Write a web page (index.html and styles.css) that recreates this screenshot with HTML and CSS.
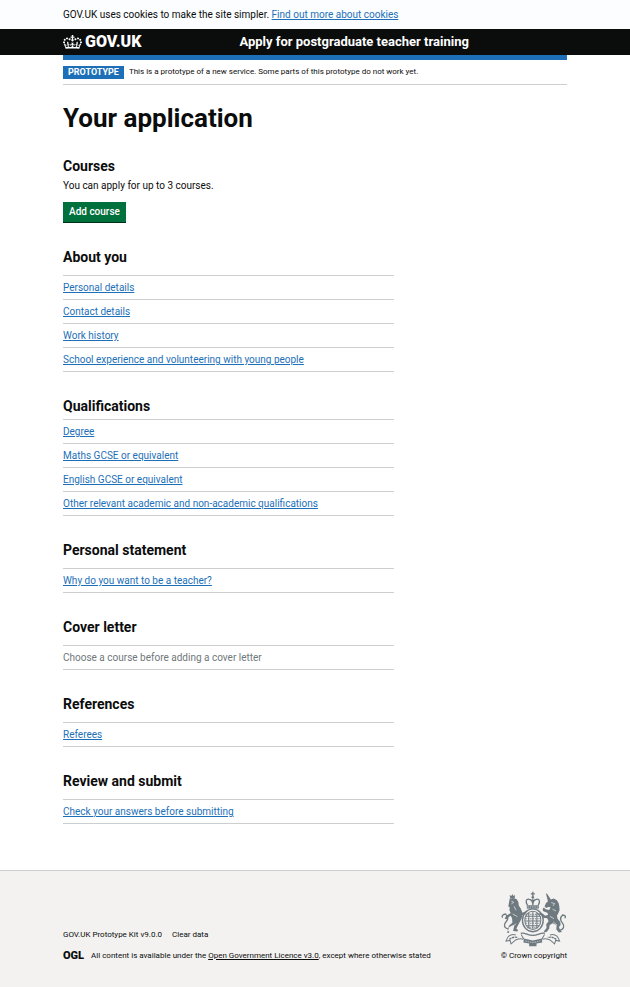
FILE: index.html
```html
<!DOCTYPE html>
<html lang="en">
<head>
<meta charset="utf-8">
<meta name="viewport" content="width=device-width, initial-scale=1">
<title>Your application</title>
<link rel="stylesheet" href="styles.css">
</head>
<body>
<div class="cookie-bar">
  <p class="container">GOV.UK uses cookies to make the site simpler. <a href="#cookies">Find out more about cookies</a></p>
</div>
<header class="header">
  <div class="container header-row">
    <a class="logo" href="#home">
      <svg class="crown" viewBox="0 0 132 97" aria-hidden="true"><path fill="currentColor" fill-rule="evenodd" d="M25 30.2c3.5 1.5 7.7-.2 9.1-3.7 1.5-3.6-.2-7.8-3.9-9.2-3.6-1.4-7.6.3-9.1 3.9-1.4 3.5.3 7.5 3.9 9zM9 39.5c3.6 1.5 7.8-.2 9.2-3.7 1.5-3.6-.2-7.8-3.9-9.1-3.6-1.5-7.6.2-9.1 3.8-1.4 3.5.3 7.5 3.8 9zM4.4 57.2c3.5 1.5 7.7-.2 9.1-3.8 1.5-3.6-.2-7.7-3.9-9.1-3.5-1.5-7.6.3-9.1 3.8-1.4 3.5.3 7.6 3.9 9.1zm38.3-21.4c3.5 1.5 7.7-.2 9.1-3.8 1.5-3.6-.2-7.7-3.9-9.1-3.6-1.5-7.6.3-9.1 3.8-1.3 3.6.4 7.7 3.9 9.1zm64.4-5.6c-3.6 1.5-7.8-.2-9.1-3.7-1.5-3.6.2-7.8 3.8-9.2 3.6-1.4 7.7.3 9.2 3.9 1.3 3.5-.4 7.5-3.9 9zm15.9 9.3c-3.6 1.5-7.7-.2-9.1-3.7-1.5-3.6.2-7.8 3.7-9.1 3.6-1.5 7.7.2 9.2 3.8 1.5 3.5-.3 7.5-3.8 9zm4.7 17.7c-3.6 1.5-7.8-.2-9.2-3.8-1.5-3.6.2-7.7 3.9-9.1 3.6-1.5 7.7.3 9.2 3.8 1.3 3.5-.4 7.6-3.9 9.1zM89.3 35.8c-3.6 1.5-7.8-.2-9.2-3.8-1.4-3.6.2-7.7 3.9-9.1 3.6-1.5 7.7.3 9.2 3.8 1.4 3.6-.3 7.7-3.9 9.1zM69.7 17.7l8.9 4.7V9.3l-8.9 2.8c-.2-.3-.5-.6-.9-.9L72.4 0H59.6l3.5 11.2c-.3.3-.6.5-.9.9l-8.8-2.8v13.1l8.8-4.7c.3.3.6.7.9.9l-5 15.4v.1c-.2.8-.4 1.6-.4 2.4 0 4.1 3.1 7.5 7 8.1h.2c.3 0 .7.1 1 .1.4 0 .7 0 1-.1h.2c4-.6 7.1-4.1 7.1-8.1 0-.8-.1-1.7-.4-2.4V34l-5.1-15.4c.4-.2.7-.6 1-.9zM66 92.8c16.9 0 32.8 1.1 47.1 3.2 4-16.9 8.9-26.7 14-33.5l-9.6-3.4c1 4.9 1.1 7.2 0 10.2-1.5-1.4-3-4.3-4.2-8.7L108.6 76c2.8-2 5-3.2 7.5-3.3-4.4 9.4-10 11.9-13.6 11.2-4.3-.8-6.3-4.6-5.6-7.9 1-4.7 5.7-5.9 8-.5 4.3-8.7-3-11.4-7.6-8.8 7.1-7.2 7.9-13.5 2.1-21.1-8 6.1-8.1 12.3-4.5 20.8-4.7-5.4-12.1-2.5-9.5 6.2 3.4-5.2 7.9-2 7.2 3.1-.6 4.3-6.4 7.8-13.5 7.2-10.3-.9-10.9-8-11.2-13.8 2.5-.5 7.1 1.8 11 7.3L80.2 60c-4.1 4.4-8 5.3-12.3 5.4 1.4-4.4 8-11.6 8-11.6H55.5s6.4 7.2 7.9 11.6c-4.2-.1-8-1-12.3-5.4l1.4 16.4c3.9-5.5 8.5-7.7 10.9-7.3-.3 5.8-.9 12.8-11.1 13.8-7.2.6-12.9-2.9-13.5-7.2-.7-5 3.8-8.3 7.1-3.1 2.7-8.7-4.6-11.6-9.4-6.2 3.7-8.5 3.6-14.7-4.6-20.8-5.8 7.6-5 13.9 2.2 21.1-4.7-2.6-11.9.1-7.7 8.8 2.3-5.5 7.1-4.2 8.1.5.7 3.3-1.3 7.1-5.7 7.9-3.5.7-9-1.8-13.5-11.2 2.5.1 4.7 1.3 7.5 3.3l-4.7-15.4c-1.2 4.4-2.7 7.2-4.3 8.7-1.1-3-.9-5.3 0-10.2l-9.5 3.4c5 6.9 9.9 16.7 14 33.5 14.8-2.1 30.8-3.2 47.7-3.2z"/></svg>
      <span>GOV.UK</span>
    </a>
    <a class="service" href="#service">Apply for postgraduate teacher training</a>
  </div>
</header>
<div class="container">
  <div class="phase">
    <strong class="tag">PROTOTYPE</strong>
    <span>This is a prototype of a new service. Some parts of this prototype do not work yet.</span>
  </div>
  <main>
    <h1>Your application</h1>
    <section>
      <h2 class="lead">Courses</h2>
      <p>You can apply for up to 3 courses.</p>
      <button class="button" type="button">Add course</button>
    </section>
    <section>
      <h2>About you</h2>
      <ul class="tasks">
        <li><a href="#personal">Personal details</a></li>
        <li><a href="#contact">Contact details</a></li>
        <li><a href="#work">Work history</a></li>
        <li><a href="#school">School experience and volunteering with young people</a></li>
      </ul>
    </section>
    <section>
      <h2 class="lead">Qualifications</h2>
      <ul class="tasks">
        <li><a href="#degree">Degree</a></li>
        <li><a href="#maths">Maths GCSE or equivalent</a></li>
        <li><a href="#english">English GCSE or equivalent</a></li>
        <li><a href="#other">Other relevant academic and non-academic qualifications</a></li>
      </ul>
    </section>
    <section>
      <h2>Personal statement</h2>
      <ul class="tasks">
        <li><a href="#why">Why do you want to be a teacher?</a></li>
      </ul>
    </section>
    <section>
      <h2>Cover letter</h2>
      <ul class="tasks">
        <li class="muted">Choose a course before adding a cover letter</li>
      </ul>
    </section>
    <section>
      <h2>References</h2>
      <ul class="tasks">
        <li><a href="#referees">Referees</a></li>
      </ul>
    </section>
    <section>
      <h2>Review and submit</h2>
      <ul class="tasks">
        <li><a href="#check">Check your answers before submitting</a></li>
      </ul>
    </section>
  </main>
</div>
<footer class="footer">
  <div class="container footer-row">
    <div class="meta">
      <div class="links"><a href="#kit">GOV.UK Prototype Kit v9.0.0</a><a href="#clear">Clear data</a></div>
      <div class="licence"><span class="ogl">OGL</span><span>All content is available under the <a href="#ogl">Open Government Licence v3.0</a>, except where otherwise stated</span></div>
    </div>
    <a class="copyright" href="#crown">
      <svg class="crest" viewBox="28 32 200 166" aria-hidden="true">
        <g fill="currentColor">
          <!-- crown -->
          <path d="M124 34h4v4h4v4h-4v5h-4v-5h-4v-4h4z"/>
          <circle cx="126" cy="50" r="4"/>
          <path d="M108 74h36v10h-36z"/>
          <!-- lion -->
          <path d="M57 43l5 3 3-6 3 6 5-3-1 9H58z"/>
          <path d="M57 54l12-2 9 4 5 9 1 10 6 9 5 12 10-4 2 5-12 7-3 11-5 9-6 11-4 9 5 4-2 4-13-1 2-9 2-10-8 3-9 5-4 9 6 4-2 4H50l1-14 5-9 9-8-1-13-4-8-7 5-5 6-6-2 4-8 9-6 5-3-4-9 1-8-4-2 1-8z"/>
          <!-- unicorn -->
          <path d="M165 38l4 2 11 17 8-3 9 4 6 9 2 10 1 11-4 10-4 7 2 9 8 10 1 9-5 6 3 8 6 7-9 1-8-9 1-12-12-6-9 6-1 9-7 10-10 2 3-6 6-7-1-11 7-9-4-9-13-2-5-7-7-3 3-5 9 3 7 6 9-3-3-6-12-4-2-7 4-4 5 5 11 2 4-8-7-1-6 3-5-4 4-10 6-6z"/>
        </g>
        <g fill="none" stroke="currentColor" stroke-width="4">
          <path d="M110 74c-7-11-4-20 5-18 7 1 11 7 11 17 0-10 4-16 11-17 9-2 12 7 5 18M126 54v20"/>
          <ellipse cx="126" cy="119" rx="31" ry="34"/>
          <ellipse stroke-width="3" cx="126" cy="119" rx="24" ry="27"/>
          <path stroke-width="3" d="M103 107h46M102 121h48M107 135h38M126 94v50M114 96v46M138 96v46"/>
          <path stroke-width="3" stroke-dasharray="4 3" d="M104 101h44M104 114h44M104 128h44M109 141h34"/>
          <path d="M54 145c-17-3-14-16-8-22 8-8 7-16-2-23-9 2-12 8-8 11"/>
          <path d="M203 150c17-3 18-15 12-22-8-9-9-17 0-25 8 0 11 6 6 10"/>
          <path stroke-width="3" d="M75 163c-10-4-21 0-25 9l-4 9 12-2 3 10 13-11c10-4 16-7 23-2M177 163c10-4 21 0 25 9l4 9-12-2-3 10-13-11c-10-4-16-7-23-2M91 161l8 14M161 161l-8 14"/>
          <path stroke-dasharray="7 2" d="M56 176c10-8 16-7 26-6M196 176c-10-8-16-7-26-6"/>
          <path d="M90 158c12-4 20 6 36 6s24-10 36-6"/>
        </g>
        <path fill="currentColor" d="M99 173l27 6 27-6 1 12-17 3v8h-22v-8l-17-3z"/>
        <path fill="none" stroke="#f3f2f1" stroke-width="2" stroke-dasharray="4 3" d="M104 180q22 9 44 0M110 79h32"/>
        <path fill="none" stroke="#f3f2f1" stroke-width="2" d="M62 62l7 3-7 5M70 77l6 12M66 100l14 8M66 137l10-8M181 66l10 3-5 7M185 86l10 5M177 107l12 7M187 124l11 9"/>
      </svg>
      <span>© Crown copyright</span>
    </a>
  </div>
</footer>
</body>
</html>
```
FILE: styles.css
```css
* { box-sizing: border-box; }
body {
  margin: 0;
  background: #fff;
  color: #0b0c0c;
  font-family: Roboto, "Liberation Sans", sans-serif;
  font-size: 10px;
  line-height: 14px;
}
h1, h2, p, ul { margin: 0; padding: 0; }
a { color: #1d70b8; }
.container { margin: 0 10%; }
.cookie-bar { padding: 8px 0 7px; background: #fbfdfe; }
.header { background: #0b0c0c; color: #fff; }
.header-row { display: grid; grid-template-columns: 35% 1fr; align-items: center; height: 26px; }
.header a { color: inherit; text-decoration: none; font-weight: 700; }
.header .logo { display: flex; align-items: center; gap: 3px; font-size: 16px; font-weight: 900; }
.crown { width: 19px; height: 14px; }
.service { font-size: 13px; }
.phase {
  display: flex;
  align-items: center;
  gap: 5px;
  height: 30px;
  border-top: 5px solid #1d70b8;
  border-bottom: 1px solid #cccecf;
  font-size: 8px;
}
.tag { padding: 0 5px; background: #1d70b8; color: #fff; font-size: 9px; line-height: 13px; }
main { padding: 19px 0 22px; }
h1 { margin-bottom: 24px; font-size: 26px; line-height: 28px; }
h2 { margin-bottom: 8px; font-size: 14px; line-height: 20px; }
h2.lead { margin-bottom: 3px; }
section { margin-bottom: 24px; }
.button {
  display: block;
  margin-top: 9px;
  padding: 3px 6px;
  border: 0;
  border-bottom: 1px solid #002d18;
  background: #00703c;
  color: #fff;
  font: inherit;
  font-weight: 500;
}
.button { line-height: 14px; }
.tasks { width: calc(66.6667% - 5px); list-style: none; border-top: 1px solid #cccecf; }
.tasks li { padding: 5px 0 4px; border-bottom: 1px solid #cccecf; }
.muted { color: #6f777b; }
.footer { border-top: 1px solid #cccecf; background: #f3f2f1; font-size: 8px; }
.footer-row { display: flex; justify-content: space-between; align-items: flex-end; padding: 20px 0 25px; }
.footer a { color: inherit; }
.links { display: flex; gap: 10px; margin-bottom: 7px; }
.links a, .copyright { text-decoration: none; }
.licence { display: flex; align-items: center; gap: 7px; }
.ogl { font-size: 11px; font-weight: 900; }
.copyright { display: flex; flex-direction: column; align-items: flex-end; gap: 2px; }
.crest { width: 67px; height: 56px; color: #6f7a80; }
```
